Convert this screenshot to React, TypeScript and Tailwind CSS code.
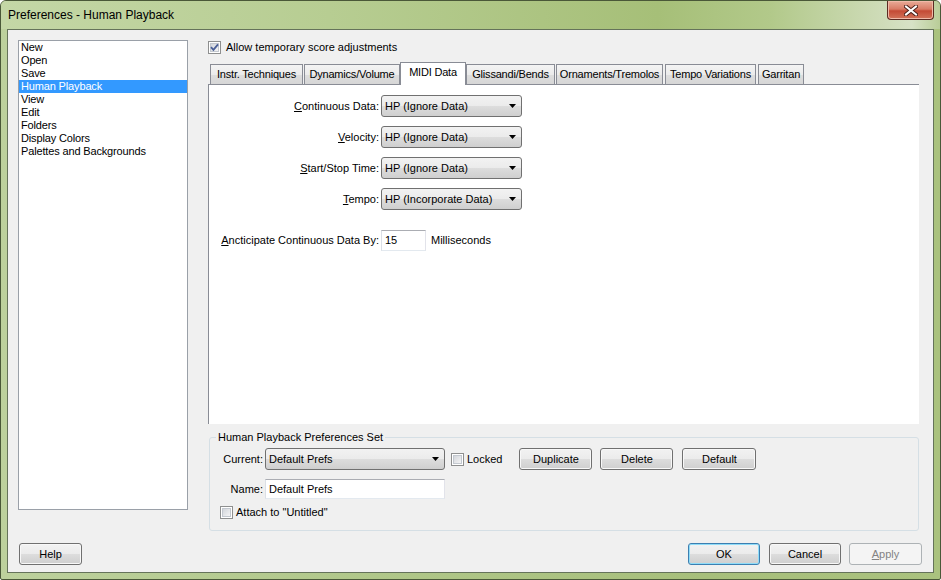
import React from "react";

const btnBg =
  "bg-[linear-gradient(to_bottom,#f2f2f2_0%,#ebebeb_50%,#dddddd_50%,#cfcfcf_100%)]";

function Check({ checked }: { checked?: boolean }) {
  return (
    <span className="relative flex h-[13px] w-[13px] shrink-0 items-center justify-center border border-[#8e8f8f] bg-white">
      <span className="h-[9px] w-[9px] border border-[#c3c8cf] bg-[linear-gradient(135deg,#d3d6db_0%,#f4f4f5_100%)]" />
      {checked && (
        <svg className="absolute left-0 top-0" width="11" height="11" viewBox="0 0 11 11">
          <path d="M2 5.2 L4.4 7.8 L9 2.3" fill="none" stroke="#4a5f97" strokeWidth="1.8" />
        </svg>
      )}
    </span>
  );
}

function Arrow() {
  return (
    <svg width="7" height="4" viewBox="0 0 7 4" className="shrink-0">
      <polygon points="0,0 7,0 3.5,4" fill="#000" />
    </svg>
  );
}

function Combo({ value, className }: { value: string; className: string }) {
  return (
    <div
      className={`flex h-[22px] items-center justify-between rounded-[3px] border border-[#707070] pl-[3px] pr-[5px] ${btnBg} ${className}`}
    >
      <span>{value}</span>
      <Arrow />
    </div>
  );
}

function TextBox({ value, className }: { value: string; className: string }) {
  return (
    <div
      className={`flex items-center border border-t-[#abadb3] border-l-[#dbdfe6] border-r-[#e2e3ea] border-b-[#e3e9ef] bg-white pl-[3px] ${className}`}
    >
      {value}
    </div>
  );
}

function Btn({
  children,
  className = "",
  kind = "normal",
}: {
  children: React.ReactNode;
  className?: string;
  kind?: "normal" | "default" | "disabled";
}) {
  const look =
    kind === "disabled"
      ? "border-[#adb2b5] bg-[#f4f4f4] text-[#838383]"
      : kind === "default"
        ? `border-[#3c7fb1] shadow-[inset_0_0_0_1px_#8fdcf8] ${btnBg}`
        : `border-[#707070] shadow-[inset_0_0_0_1px_#f8f8f8] ${btnBg}`;
  return (
    <div
      className={`flex h-[22px] items-center justify-center rounded-[3px] border ${look} ${className}`}
    >
      {children}
    </div>
  );
}

const listItems = [
  "New",
  "Open",
  "Save",
  "Human Playback",
  "View",
  "Edit",
  "Folders",
  "Display Colors",
  "Palettes and Backgrounds",
];

const tabs = [
  { label: "Instr. Techniques", w: "w-[93px]", ml: "ml-0" },
  { label: "Dynamics/Volume", w: "w-[96px]", ml: "ml-[1px]" },
  { label: "MIDI Data", w: "w-[66px]", ml: "ml-0", active: true },
  { label: "Glissandi/Bends", w: "w-[89px]", ml: "ml-0" },
  { label: "Ornaments/Tremolos", w: "w-[107px]", ml: "ml-[1px]" },
  { label: "Tempo Variations", w: "w-[91px]", ml: "ml-[2px]" },
  { label: "Garritan", w: "w-[46px]", ml: "ml-[2px]" },
];

function FieldRow({
  label,
  children,
  className = "",
}: {
  label: React.ReactNode;
  children: React.ReactNode;
  className?: string;
}) {
  return (
    <div className={`flex items-center ${className}`}>
      <div className="w-[170px] text-right">{label}</div>
      <div className="ml-[2px] flex items-center">{children}</div>
    </div>
  );
}

export default function App() {
  return (
    <div className="h-[580px] w-[941px] bg-white font-['Liberation_Sans',Arial,sans-serif] text-[11px] leading-[13px] text-black">
      <div className="flex h-[580px] w-[941px] flex-col rounded-t-[6px] rounded-b-[2px] border border-[#4a5838] bg-[linear-gradient(to_right,#bdd19d_0%,#b0c789_40%,#a7bf7b_75%,#aac27e_100%)]">
        {/* title bar */}
        <div className="relative flex h-[28px] shrink-0 items-center rounded-t-[5px] bg-[linear-gradient(to_right,#c4d7a6_0%,#b7cd92_35%,#a6bf78_70%,#b2c98a_82%,#cfdcb9_94%,#d7e2c6_97%,#b9cd98_100%)] pl-[7px] text-[12px] leading-[16px]">
          <span>Preferences - Human Playback</span>
          <div className="absolute right-[6px] top-0 flex h-[19px] w-[47px] items-center justify-center rounded-b-[4px] border border-t-0 border-[#5b2a22] bg-[linear-gradient(to_bottom,#e9ab98_0%,#d87c66_45%,#c44a35_55%,#d2735a_100%)] shadow-[inset_0_0_0_1px_#f0b9a8]">
            <svg width="14" height="11" viewBox="0 0 14 11">
              <path d="M2 1.5 L12 9.5 M12 1.5 L2 9.5" stroke="#4a1f18" strokeWidth="4" strokeLinecap="square" />
              <path d="M2 1.5 L12 9.5 M12 1.5 L2 9.5" stroke="#ffffff" strokeWidth="2" strokeLinecap="square" />
            </svg>
          </div>
        </div>

        {/* client area */}
        <div className="mx-[6px] mb-[6px] flex h-[544px] flex-col border border-[#65735a] bg-[#f0f0f0]">
          <div className="flex pl-[10px] pt-[10px]">
            {/* category list */}
            <div className="h-[470px] w-[170px] shrink-0 border border-[#9aa0a8] bg-white tracking-[-0.15px]">
              {listItems.map((item) => (
                <div
                  key={item}
                  className={`h-[13px] pl-[2px] leading-[13px] ${
                    item === "Human Playback" ? "bg-[#3399ff] text-white" : ""
                  }`}
                >
                  {item}
                </div>
              ))}
            </div>

            {/* right column */}
            <div className="ml-[20px] flex w-[711px] flex-col">
              <div className="flex h-[15px] items-center">
                <Check checked />
                <span className="ml-[5px]">Allow temporary score adjustments</span>
              </div>

              {/* tabs */}
              <div className="relative z-10 mt-[7px] flex h-[22px] items-end pl-[2px] tracking-[-0.2px]">
                {tabs.map((t) =>
                  t.active ? (
                    <div
                      key={t.label}
                      className={`-mb-[1px] flex h-[23px] items-center justify-center border border-b-0 border-[#898c95] bg-white pb-[3px] ${t.w} ${t.ml}`}
                    >
                      {t.label}
                    </div>
                  ) : (
                    <div
                      key={t.label}
                      className={`flex h-[20px] items-center justify-center whitespace-nowrap border border-b-0 border-[#898c95] bg-[linear-gradient(to_bottom,#f4f4f4_0%,#ebebeb_50%,#dedede_50%,#d6d6d6_100%)] ${t.w} ${t.ml}`}
                    >
                      {t.label}
                    </div>
                  ),
                )}
              </div>

              {/* tab page */}
              <div className="flex h-[340px] flex-col border-l border-t border-[#898c95] bg-white pt-[10px]">
                <FieldRow
                  label={
                    <>
                      <span className="underline">C</span>ontinuous Data:
                    </>
                  }
                >
                  <Combo value="HP (Ignore Data)" className="w-[141px]" />
                </FieldRow>
                <FieldRow
                  className="mt-[9px]"
                  label={
                    <>
                      <span className="underline">V</span>elocity:
                    </>
                  }
                >
                  <Combo value="HP (Ignore Data)" className="w-[141px]" />
                </FieldRow>
                <FieldRow
                  className="mt-[9px]"
                  label={
                    <>
                      <span className="underline">S</span>tart/Stop Time:
                    </>
                  }
                >
                  <Combo value="HP (Ignore Data)" className="w-[141px]" />
                </FieldRow>
                <FieldRow
                  className="mt-[9px]"
                  label={
                    <>
                      <span className="underline">T</span>empo:
                    </>
                  }
                >
                  <Combo value="HP (Incorporate Data)" className="w-[141px]" />
                </FieldRow>
                <FieldRow
                  className="mt-[20px]"
                  label={
                    <>
                      <span className="underline">A</span>ncticipate Continuous Data By:
                    </>
                  }
                >
                  <TextBox value="15" className="h-[21px] w-[45px]" />
                  <span className="ml-[5px]">Milliseconds</span>
                </FieldRow>
              </div>

              {/* preferences set group */}
              <div className="relative ml-[1px] mt-[13px] h-[94px] w-[710px] rounded-[3px] border border-[#d5dfe5] pt-[10px]">
                <span className="absolute -top-[7px] left-[6px] bg-[#f0f0f0] px-[2px]">
                  Human Playback Preferences Set
                </span>
                <div className="flex h-[22px] items-center">
                  <div className="w-[53px] text-right">Current:</div>
                  <Combo value="Default Prefs" className="ml-[2px] w-[180px]" />
                  <div className="ml-[6px] flex items-center">
                    <Check />
                    <span className="ml-[3px]">Locked</span>
                  </div>
                  <Btn className="ml-[17px] w-[73px]">Duplicate</Btn>
                  <Btn className="ml-[8px] w-[73px]">Delete</Btn>
                  <Btn className="ml-[9px] w-[74px]">Default</Btn>
                </div>
                <div className="mt-[9px] flex h-[20px] items-center">
                  <div className="w-[53px] text-right">Name:</div>
                  <TextBox value="Default Prefs" className="ml-[2px] h-[20px] w-[180px]" />
                </div>
                <div className="ml-[10px] mt-[7px] flex items-center">
                  <Check />
                  <span className="ml-[3px]">Attach to "Untitled"</span>
                </div>
              </div>
            </div>
          </div>

          {/* bottom buttons */}
          <div className="mt-[12px] flex items-center justify-between pl-[11px] pr-[11px]">
            <Btn className="w-[63px]">Help</Btn>
            <div className="flex items-center">
              <Btn kind="default" className="w-[72px]">
                OK
              </Btn>
              <Btn className="ml-[9px] w-[72px]">Cancel</Btn>
              <Btn kind="disabled" className="ml-[8px] w-[73px]">
                <span>
                  <span className="underline">A</span>pply
                </span>
              </Btn>
            </div>
          </div>
        </div>
      </div>
    </div>
  );
}
